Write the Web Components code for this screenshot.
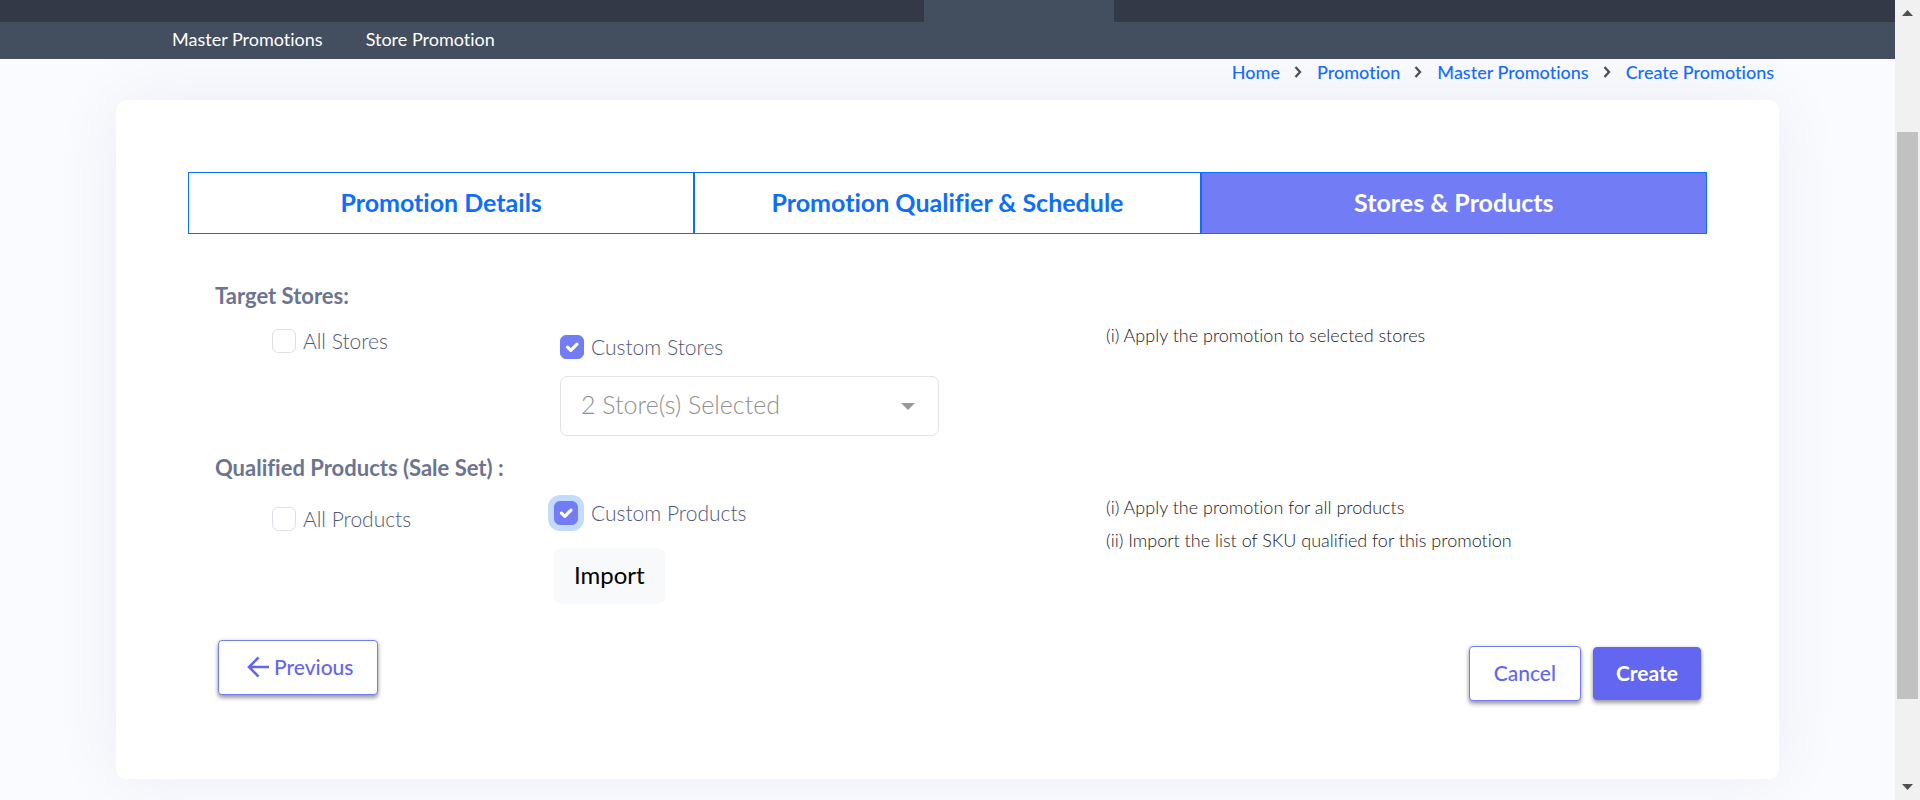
<!DOCTYPE html>
<html lang="en">
<head>
<meta charset="utf-8">
<title>Create Promotions</title>
<style>
  body { margin: 0; font-family: Lato, "Open Sans", sans-serif; font-variant-ligatures: none; background: #fafbff; color: #6b7490; }
</style>
</head>
<body>
<promo-shell>
  <top-nav slot="header">
    <a href="#master">Master Promotions</a>
    <a href="#store">Store Promotion</a>
  </top-nav>
  <bread-crumbs>
    <crumb-link href="#home">Home</crumb-link>
    <crumb-link href="#promotion">Promotion</crumb-link>
    <crumb-link href="#master">Master Promotions</crumb-link>
    <crumb-link href="#create">Create Promotions</crumb-link>
  </bread-crumbs>
  <promo-card>
    <step-tabs>
      <step-tab>Promotion Details</step-tab>
      <step-tab>Promotion Qualifier &amp; Schedule</step-tab>
      <step-tab active>Stores &amp; Products</step-tab>
    </step-tabs>
    <target-section class="stores" heading="Target Stores:">
      <check-field slot="all" label="All Stores"></check-field>
      <check-field slot="custom" label="Custom Stores" checked></check-field>
      <store-select slot="custom" value="2 Store(s) Selected"></store-select>
      <span slot="notes">(i) Apply the promotion to selected stores</span>
    </target-section>
    <target-section class="products" heading="Qualified Products (Sale Set) :">
      <check-field slot="all" label="All Products"></check-field>
      <check-field slot="custom" label="Custom Products" checked ring></check-field>
      <action-button slot="custom" kind="soft">Import</action-button>
      <span slot="notes">(i) Apply the promotion for all products</span>
      <span slot="notes">(ii) Import the list of SKU qualified for this promotion</span>
    </target-section>
    <form-actions>
      <action-button slot="back" kind="back">Previous</action-button>
      <action-button kind="outline">Cancel</action-button>
      <action-button kind="solid">Create</action-button>
    </form-actions>
  </promo-card>
</promo-shell>

<script>
const define = (name, render) => customElements.define(name, class extends HTMLElement {
  connectedCallback() {
    if (this.shadowRoot) return;
    const root = this.attachShadow({ mode: 'open' });
    const tpl = document.createElement('template');
    tpl.innerHTML = render(this);
    root.append(tpl.content.cloneNode(true));
  }
});

define('promo-shell', () => `
  <style>
    :host { display: grid; grid-template-columns: minmax(0, 1fr) 25px; height: 100vh; overflow: hidden; }
    main { padding: 0 6.12%; }
    .rail { background: #f1f1f1; display: grid; grid-template-rows: 32px 1fr 32px; height: 100vh; }
    .rail svg { display: block; width: 25px; height: 32px; fill: #505050; }
    .track { display: grid; grid-template-rows: 100fr 567fr 69fr; padding: 0 2px; }
    .thumb { grid-row: 2; background: #c1c1c1; }
  </style>
  <div><slot name="header"></slot><main><slot></slot></main></div>
  <div class="rail" aria-hidden="true">
    <svg viewBox="0 0 25 32"><path d="M7 16l5.500-6 5.500 6z"/></svg>
    <div class="track"><div class="thumb"></div></div>
    <svg viewBox="0 0 25 32"><path d="M7 16h11l-5.500 6z"/></svg>
  </div>`);

define('top-nav', () => `
  <style>
    :host { display: block; background: #434e5e; position: relative; z-index: 1; }
    .modules { display: grid; grid-template-columns: 924fr 190fr 781fr; height: 22px; background: #333947; }
    .current { grid-column: 2; background: #434e5e; }
    nav { display: flex; gap: 43px; box-sizing: border-box; padding: 0 0 3px 9.080%; height: 37px; align-items: center; }
    ::slotted(a) { color: #fff; font-size: 18px; line-height: 24px; text-decoration: none; }
  </style>
  <div class="modules"><div class="current"></div></div>
  <nav><slot></slot></nav>`);

define('bread-crumbs', () => `
  <style>
    :host { display: block; position: relative; z-index: 1; }
    nav { display: flex; justify-content: flex-end; height: 26px; margin-bottom: 15px; padding-right: 5px; align-items: center; }
  </style>
  <nav aria-label="Breadcrumb"><slot></slot></nav>`);

define('crumb-link', el => `
  <style>
    :host { display: flex; align-items: center; font-size: 18px; line-height: 24px; font-weight: 500; }
    a { color: #146cff; text-decoration: none; }
    svg { width: 8px; height: 12px; margin: 0 15px 0 14px; }
    :host(:first-child) svg { display: none; }
  </style>
  <svg viewBox="0 0 8 12" fill="none" stroke="#4a4f57" stroke-width="2.300"><path d="M1.500 1l4.500 5-4.500 5"/></svg>
  <a href="${el.getAttribute('href')}"><slot></slot></a>`);

define('promo-card', () => `
  <style>
    :host { display: block; background: #fff; border-radius: 10px; padding: 72px 72px 78px;
      box-shadow: 0 0 72px rgba(30, 30, 50, .06); }
  </style><slot></slot>`);

define('step-tabs', () => `
  <style>:host { display: grid; grid-template-columns: repeat(3, 1fr); margin-bottom: 47px; }</style><slot></slot>`);

define('step-tab', () => `
  <style>
    :host { display: block; }
    button { display: block; width: 100%; height: 62px; border: 1px solid #0d6efd; background: #fff; color: #0d6efd;
      font: 700 25px/32px Lato, sans-serif; font-variant-ligatures: none; padding: 0 0 2px; }
    :host([active]) button { background: #727cf5; color: #fff; }
  </style>
  <button type="button"><slot></slot></button>`);

define('target-section', el => `
  <style>
    :host { display: block; padding-left: 27px; margin-bottom: 17px; }
    h2 { margin: 0 0 8px; font-size: 22px; line-height: 30px; font-weight: 700; }
    .row { display: grid; grid-template-columns: 345fr 546fr 601fr; align-items: start; }
    .all { padding: 10px 0 0 57px; }
    .custom { padding-top: 16px; display: flex; flex-direction: column; align-items: flex-start; gap: 17px; }
    .notes { display: flex; flex-direction: column; color: #1c2028; font-size: 18px; line-height: 33px; font-weight: 300; }
    :host(.products) { margin-bottom: 36px; }
    :host(.products) .row { grid-template-columns: 339fr 552fr 601fr; }
    :host(.products) .all { padding-top: 16px; }
    :host(.products) .custom { padding-top: 10px; gap: 23px; }
  </style>
  <section>
    <h2>${el.getAttribute('heading')}</h2>
    <div class="row">
      <div class="all"><slot name="all"></slot></div>
      <div class="custom"><slot name="custom"></slot></div>
      <div class="notes"><slot name="notes"></slot></div>
    </div>
  </section>`);

define('check-field', el => `
  <style>
    :host { display: block; }
    label { display: flex; align-items: center; gap: 7px; height: 24px; font-size: 21px; line-height: 24px; font-weight: 300; color: #4f5977; }
    :host([ring]) label { gap: 13px; }
    .box { display: grid; }
    .box > * { grid-area: 1 / 1; }
    input { appearance: none; width: 24px; height: 24px; margin: 0; border: 1px solid #dfe0e5; border-radius: 6px; background: #fff; }
    input:checked { background: #727cf5; border-color: #727cf5; }
    :host([ring]) input { box-shadow: 0 0 0 6px #c2dbfe; }
    svg { width: 24px; height: 24px; pointer-events: none; visibility: hidden; position: relative; }
    input:checked + svg { visibility: visible; }
  </style>
  <label><span class="box"><input type="checkbox"${el.hasAttribute('checked') ? ' checked' : ''}>
    <svg viewBox="0 0 24 24" fill="none" stroke="#fff" stroke-width="3.200" stroke-linecap="round" stroke-linejoin="round"><path d="M7.500 12.200l3.300 3.200 6.200-6.300"/></svg></span>${el.getAttribute('label')}</label>`);

define('store-select', el => `
  <style>
    :host { display: block; width: 379px; max-width: 100%; }
    .field { display: grid; align-items: center; }
    .field > * { grid-area: 1 / 1; }
    select { appearance: none; width: 100%; height: 60px; border: 1px solid #e2e3e6; border-radius: 7px; background: #fff;
      color: #909090; font: 300 25px/32px Lato, sans-serif; padding: 0 50px 5px 20px; }
    svg { justify-self: end; margin-right: 24px; width: 14px; height: 7px; fill: #999; pointer-events: none; position: relative; }
  </style>
  <div class="field">
    <select aria-label="Custom Stores"><option>${el.getAttribute('value')}</option></select>
    <svg viewBox="0 0 14 7"><path d="M0 0h14L7 7z"/></svg>
  </div>`);

define('form-actions', () => `
  <style>
    :host { display: flex; justify-content: space-between; align-items: flex-start; padding: 0 6px 0 30px; }
    .end { display: flex; align-items: center; gap: 12px; padding-top: 6px; }
  </style>
  <slot name="back"></slot><div class="end"><slot></slot></div>`);

define('action-button', () => `
  <style>
    :host { display: block; }
    button { display: flex; align-items: center; justify-content: center; box-sizing: border-box; height: 55px;
      border: 1px solid #727cf5; border-radius: 4px; background: #fff; color: #6366f1; font: 500 21px/28px Lato, sans-serif;
      padding: 0 24px 2px; box-shadow: 0 3px 4px rgba(0, 0, 0, .36), 0 0 4px rgba(0, 0, 0, .12); }
    svg { display: none; width: 22px; height: 22px; margin-right: 5px; }
    :host([kind=back]) button { padding: 0 23px 2px 28px; }
    :host([kind=back]) svg { display: block; }
    :host([kind=solid]) button { height: 53px; background: #6366f1; border-color: #6366f1; color: #fff; font-weight: 700; padding: 0 22px 2px; }
    :host([kind=soft]) button { height: 56px; border: 0; border-radius: 8px; background: #f8f9fb; color: #000; font: 400 24px/32px Lato, sans-serif; padding: 0 20px 2px; box-shadow: none; }
  </style>
  <button type="button"><svg viewBox="0 0 22 22" fill="none" stroke="currentColor" stroke-width="2.600"><path d="M11.500 1.500L2 11l9.500 9.500M2 11h20"/></svg><slot></slot></button>`);
</script>
</body>
</html>
